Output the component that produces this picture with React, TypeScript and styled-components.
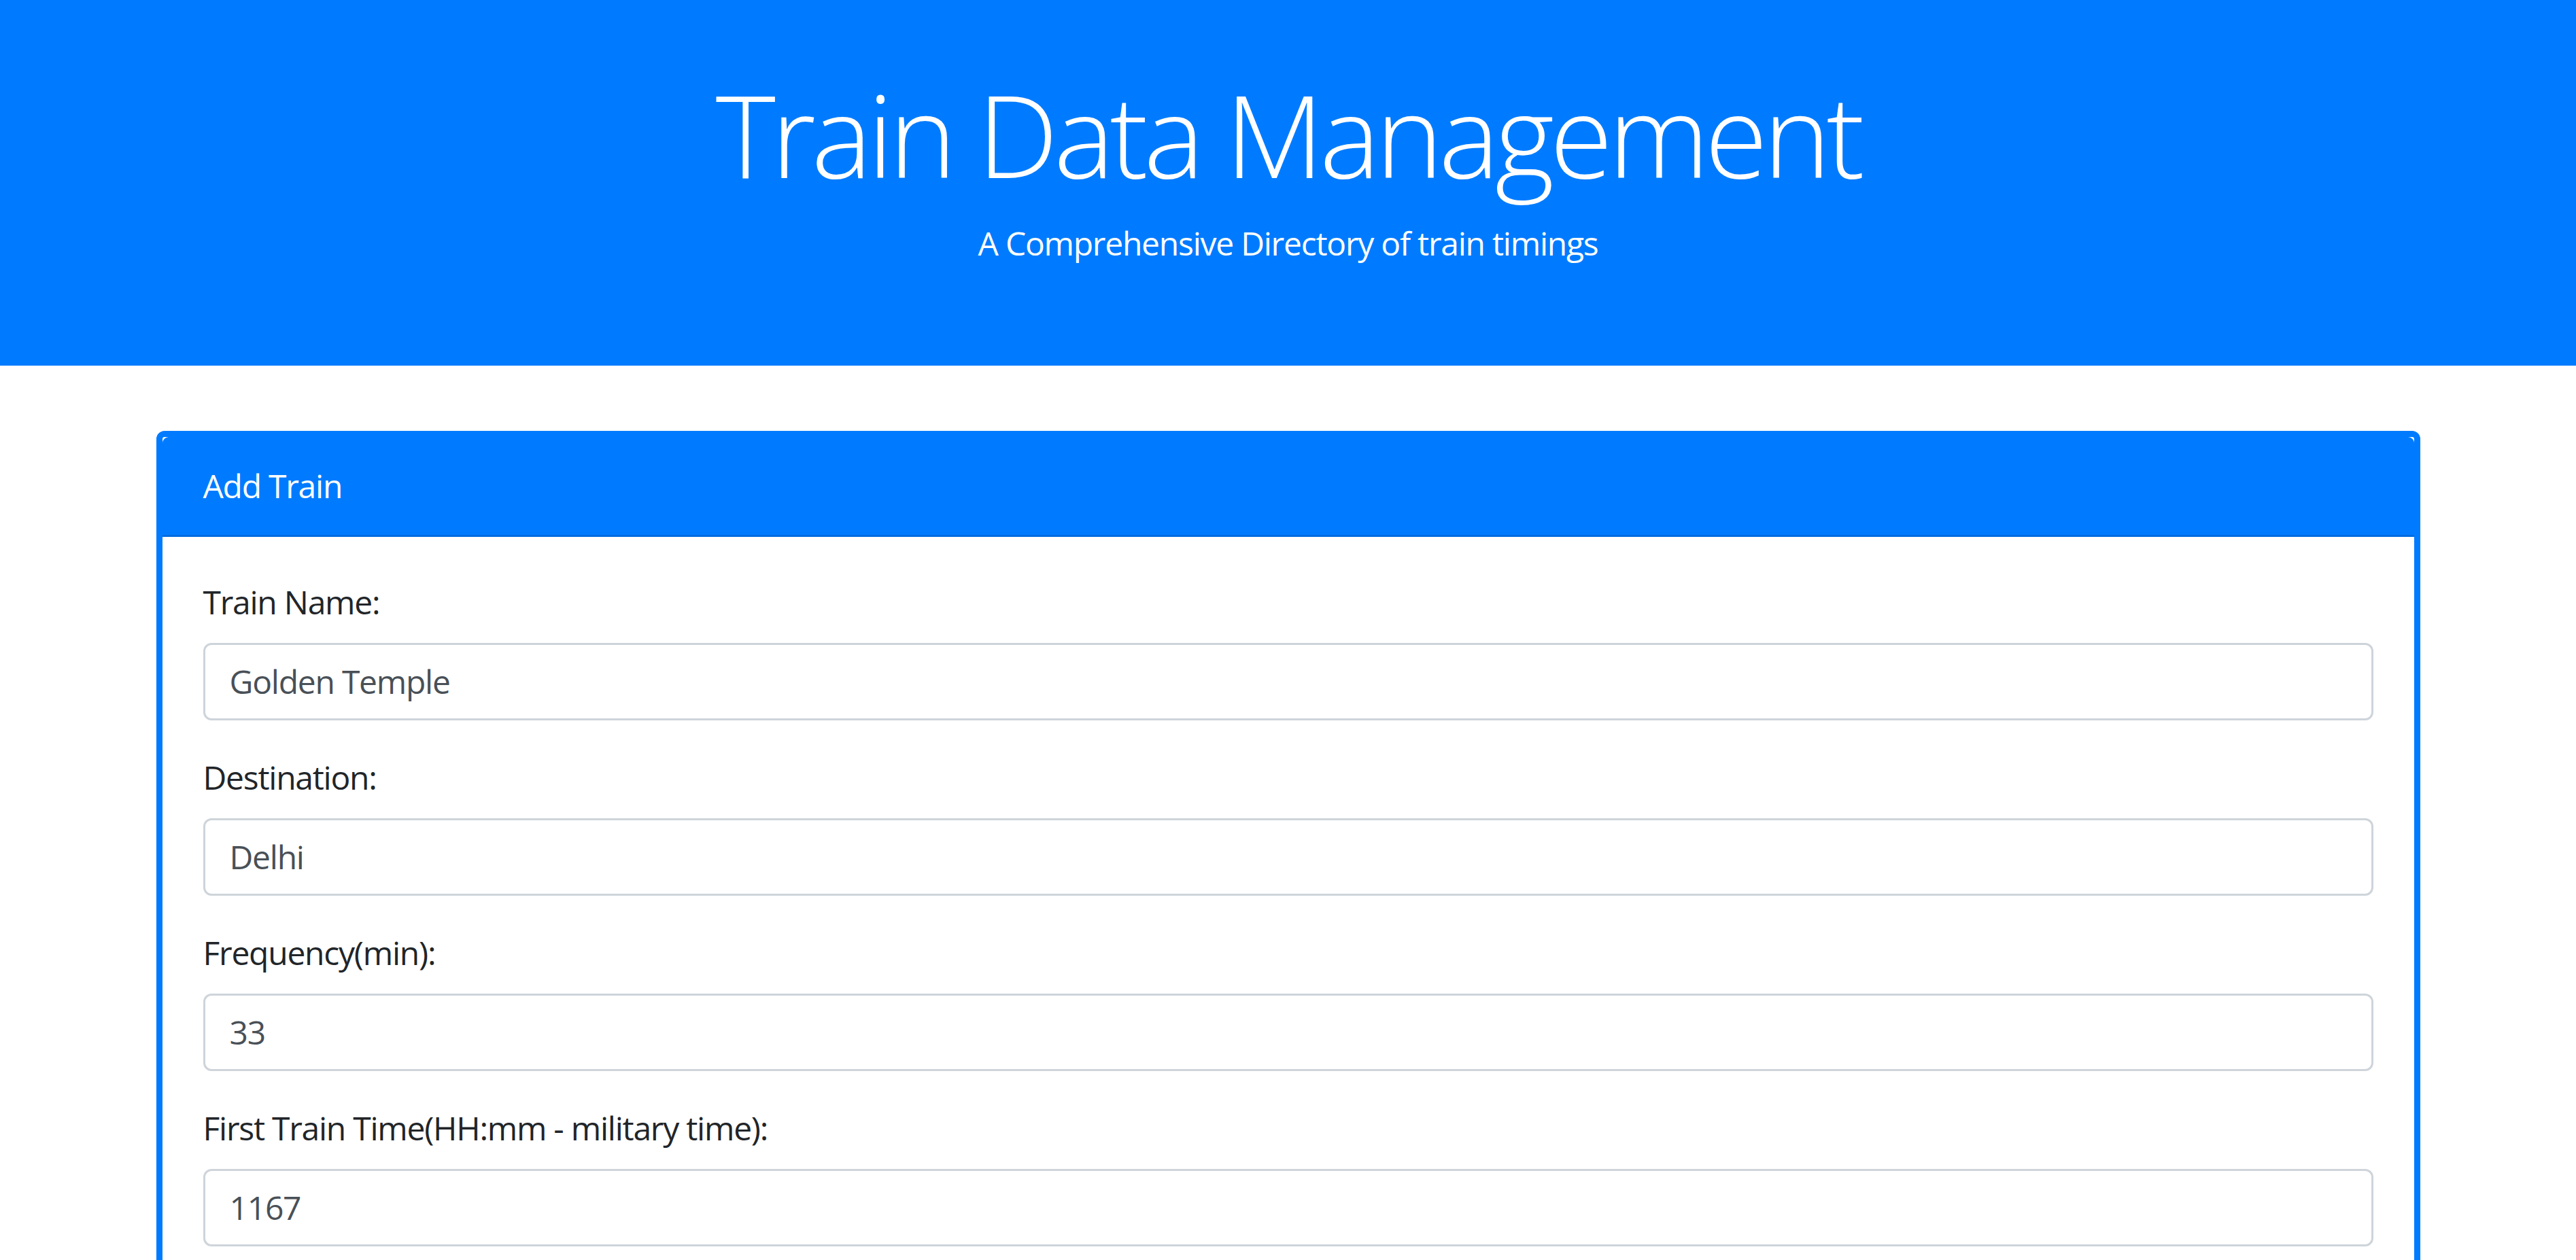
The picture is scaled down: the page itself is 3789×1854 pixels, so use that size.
import React from "react";
import styled, { createGlobalStyle } from "styled-components";

const Global = createGlobalStyle`
  html, body { margin: 0; padding: 0; background: #fff; }
  body {
    font-family: "Open Sans", "Noto Sans", "Liberation Sans", sans-serif;
    font-size: 48px;
    line-height: 1.5;
    letter-spacing: -0.026em;
    color: #212529;
  }
  * { box-sizing: border-box; }
`;

const Jumbotron = styled.header`
  background: #007bff;
  color: #fff;
  padding: 96px 0;
  margin-bottom: 96px;
  text-align: center;
`;

const Title = styled.h1`
  margin: 0 0 24px;
  font-size: 168px;
  font-weight: 300;
  line-height: 1.2;
  letter-spacing: -0.038em;
`;

const Subtitle = styled.p`
  margin: 0 0 48px;
  font-size: 48px;
  line-height: 1.5;
`;

const Container = styled.main`
  max-width: 3420px;
  margin: 0 auto;
  padding: 0 45px;
`;

const Card = styled.section`
  background: #fff;
  border: 9px solid #007bff;
  border-radius: 12px;
  min-height: 1300px;
`;

const CardHeader = styled.div`
  background: #007bff;
  color: #fff;
  padding: 36px 60px;
  line-height: 72px;
  border-bottom: 3px solid rgba(0, 0, 0, 0.125);
  border-radius: 9px 9px 0 0;
`;

const CardBody = styled.form`
  padding: 60px;
`;

const FormGroup = styled.div`
  margin-bottom: 48px;
`;

const Label = styled.label`
  display: inline-block;
  margin-bottom: 24px;
`;

const Input = styled.input`
  display: block;
  width: 100%;
  height: 114px;
  padding: 18px 36px;
  font: inherit;
  font-size: 48px;
  line-height: 1.5;
  letter-spacing: -0.026em;
  color: #495057;
  background: #fff;
  border: 3px solid #ced4da;
  border-radius: 12px;
  outline: none;
`;

const fields = [
  { id: "train-name", label: "Train Name:", value: "Golden Temple" },
  { id: "destination", label: "Destination:", value: "Delhi" },
  { id: "frequency", label: "Frequency(min):", value: "33" },
  { id: "first-time", label: "First Train Time(HH:mm - military time):", value: "1167" },
];

export default function App() {
  return (
    <>
      <Global />
      <Jumbotron>
        <Title>Train Data Management</Title>
        <Subtitle>A Comprehensive Directory of train timings</Subtitle>
      </Jumbotron>
      <Container>
        <Card>
          <CardHeader>Add Train</CardHeader>
          <CardBody onSubmit={(e) => e.preventDefault()}>
            {fields.map((f) => (
              <FormGroup key={f.id}>
                <Label htmlFor={f.id}>{f.label}</Label>
                <Input id={f.id} type="text" defaultValue={f.value} />
              </FormGroup>
            ))}
          </CardBody>
        </Card>
      </Container>
    </>
  );
}
